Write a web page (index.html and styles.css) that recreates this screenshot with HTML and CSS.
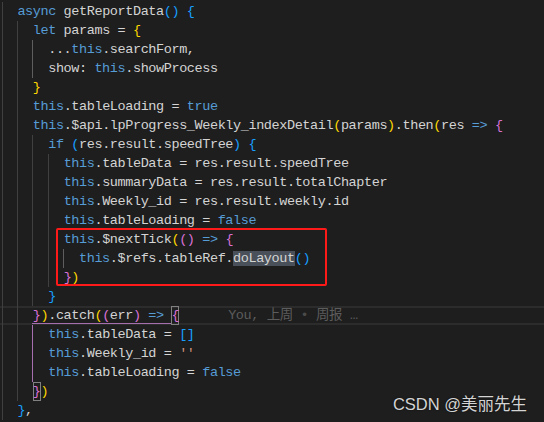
FILE: index.html
```html
<!DOCTYPE html>
<html>
<head>
<meta charset="utf-8">
<link rel="stylesheet" href="styles.css">
</head>
<body>
<div class="editor">
<div class="line g1">  <span class="k">async</span> getReportData<span class="b">()</span> <span class="b">{</span></div>
<div class="line g2">    <span class="k">let</span> params = <span class="y">{</span></div>
<div class="line g3 a3">      ...<span class="k">this</span>.searchForm,</div>
<div class="line g3 a3">      show: <span class="k">this</span>.showProcess</div>
<div class="line g2">    <span class="y">}</span></div>
<div class="line g2">    <span class="k">this</span>.tableLoading = <span class="k">true</span></div>
<div class="line g2">    <span class="k">this</span>.$api.lpProgress_Weekly_indexDetail<span class="y">(</span>params<span class="y">)</span>.then<span class="y">(</span>res <span class="k">=&gt;</span> <span class="p">{</span></div>
<div class="line g3">      <span class="k">if</span> <span class="b">(</span>res.result.speedTree<span class="b">)</span> <span class="b">{</span></div>
<div class="line g4">        <span class="k">this</span>.tableData = res.result.speedTree</div>
<div class="line g4">        <span class="k">this</span>.summaryData = res.result.totalChapter</div>
<div class="line g4">        <span class="k">this</span>.Weekly_id = res.result.weekly.id</div>
<div class="line g4">        <span class="k">this</span>.tableLoading = <span class="k">false</span></div>
<div class="line g4">        <span class="k">this</span>.$nextTick<span class="y">(</span><span class="p">()</span> <span class="k">=&gt;</span> <span class="p">{</span></div>
<div class="line g5 a5">          <span class="k">this</span>.$refs.tableRef.<span class="sel">doLayout</span><span class="b">()</span></div>
<div class="line g4">        <span class="p">}</span><span class="y">)</span></div>
<div class="line g3">      <span class="b">}</span></div>
<div class="line g2 cur">    <span class="p">}</span><span class="y">)</span>.catch<span class="y">(</span><span class="p">(</span>err<span class="p">)</span> <span class="k">=&gt;</span> <span class="p m">{</span><span class="blame">You, 上周 <span class="dot">•</span> 周报 …</span></div>
<div class="line g2 pg">      <span class="k">this</span>.tableData = <span class="b">[]</span></div>
<div class="line g2 pg">      <span class="k">this</span>.Weekly_id = <span class="s">''</span></div>
<div class="line g2 pg">      <span class="k">this</span>.tableLoading = <span class="k">false</span></div>
<div class="line g2">    <span class="p m">}</span><span class="y">)</span></div>
<div class="line g1">  <span class="b">}</span>,</div>
<div class="mark"></div>
<div class="wm">CSDN @美丽先生</div>
</div>
</body>
</html>
```

FILE: styles.css
```css
html, body {
  margin: 0;
  padding: 0;
  background: #1e1e1e;
}
.editor {
  --gd: linear-gradient(#404040, #404040);
  --ga: linear-gradient(#5e5e5e, #5e5e5e);
  --gp: linear-gradient(#a46fac, #a46fac);
  --cl: linear-gradient(#2c2c2c, #2c2c2c);
  position: relative;
  width: 544px;
  height: 422px;
  overflow: hidden;
  padding-top: 2px;
  box-sizing: border-box;
  background: #1e1e1e;
  font-family: "Liberation Mono", "Noto Sans CJK SC", monospace;
  font-size: 13.5px;
  letter-spacing: -0.4px;
  color: #d4d4d4;
}
.line {
  height: 19px;
  line-height: 19px;
  white-space: pre;
  padding-left: 2px;
  background-repeat: no-repeat;
  background-size: 1px 100%;
}
.g1 { background-image: var(--gd); background-position: 2px 0; }
.g2 { background-image: var(--gd), var(--gd); background-position: 2px 0, 17px 0; }
.g3 { background-image: var(--gd), var(--gd), var(--gd); background-position: 2px 0, 17px 0, 32px 0; }
.g3.a3 { background-image: var(--gd), var(--gd), var(--ga); }
.g4 { background-image: var(--gd), var(--gd), var(--gd), var(--gd); background-position: 2px 0, 17px 0, 32px 0, 48px 0; }
.g5 { background-image: var(--gd), var(--gd), var(--gd), var(--gd), var(--gd); background-position: 2px 0, 17px 0, 32px 0, 48px 0, 63px 0; }
.g5.a5 { background-image: var(--gd), var(--gd), var(--gd), var(--gd), var(--ga); }
.g2.pg { background-image: var(--gd), var(--gd), var(--gp); background-position: 2px 0, 17px 0, 32px 0; }
.g2.cur {
  background-image: var(--gd), var(--gd), var(--gp), var(--cl), var(--cl);
  background-position: 2px 0, 17px 0, 32px calc(100% - 1px), 0 0, 0 100%;
  background-size: 1px 100%, 1px 100%, 140px 1px, 100% 2px, 100% 2px;
}
.k { color: #569cd6; }
.y { color: #ffd700; }
.p { color: #da70d6; }
.b { color: #179fff; }
.s { color: #ce9178; }
.sel { background: #4a5059; }
.m {
  display: inline-block;
  box-shadow: inset 0 0 0 1px #808080;
}
.blame {
  margin-left: 49px;
  color: #5c5c5c;
}
.blame .dot { color: #4a4a4a; }
.mark {
  position: absolute;
  left: 56px;
  top: 228px;
  width: 271px;
  height: 58px;
  border: 2px solid #ff1a1a;
  border-radius: 2px;
  box-sizing: border-box;
}
.wm {
  position: absolute;
  right: 17px;
  bottom: 10px;
  font-family: "Liberation Sans", "Noto Sans CJK SC", sans-serif;
  font-size: 16.5px;
  line-height: 16.5px;
  letter-spacing: 0;
  color: #d4d4d4;
  text-shadow: 0 0 2px rgba(0,0,0,0.6);
}
```
